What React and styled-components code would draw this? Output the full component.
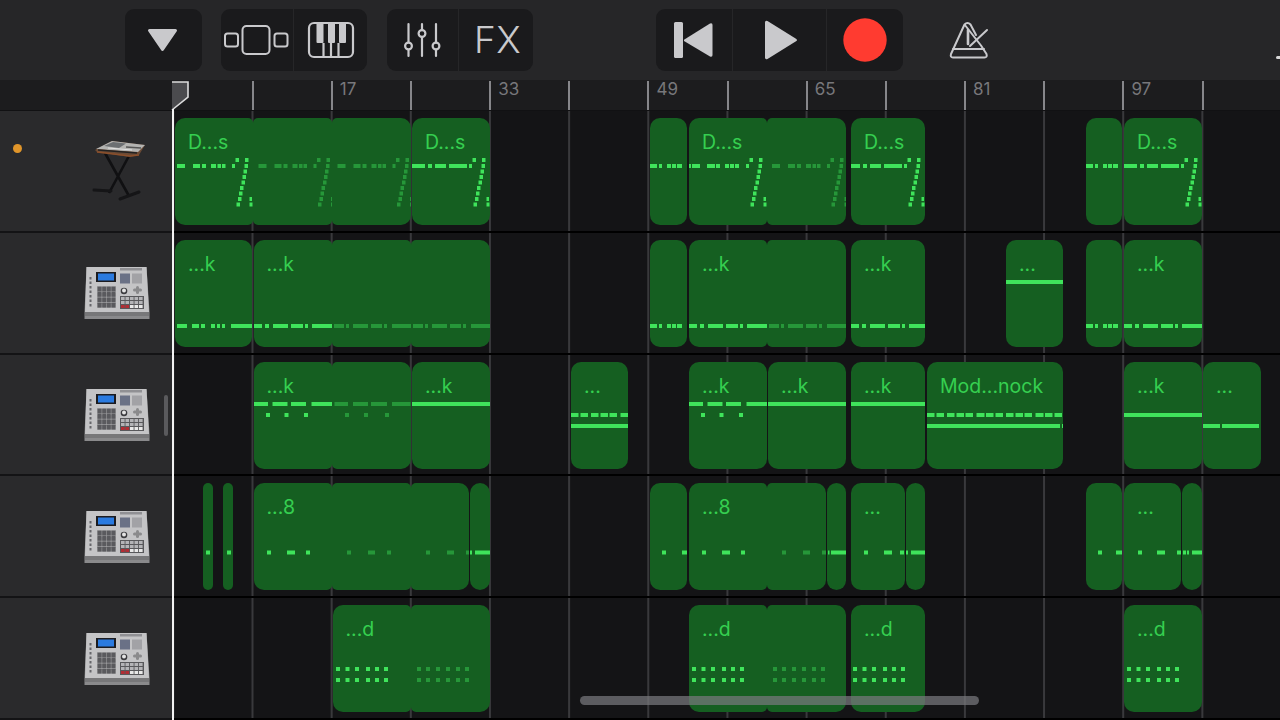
import React from "react";
import styled, { createGlobalStyle } from "styled-components";

const Global = createGlobalStyle`
  html, body { margin: 0; padding: 0; background: #141416; }
  * { box-sizing: border-box; }
`;

const Page = styled.div`
  position: relative;
  width: 1280px;
  height: 720px;
  overflow: hidden;
  display: flex;
  flex-direction: column;
  background: #141416;
  font-family: Inter, "Liberation Sans", sans-serif;
`;

/* ---------- toolbar ---------- */
const Toolbar = styled.header`
  height: 80px;
  flex: none;
  display: flex;
  align-items: center;
  padding-left: 125px;
  padding-bottom: 1px;
  background: #262628;
`;
const Group = styled.div`
  display: flex;
  height: 62px;
  margin-right: ${(p) => p.$gap || 0}px;
  background: #1a1a1c;
  border-radius: 9px;
  overflow: hidden;
`;
const Segment = styled.div`
  width: ${(p) => p.$w}px;
  display: flex;
  align-items: center;
  justify-content: center;
  padding-left: ${(p) => p.$nudge > 0 ? p.$nudge : 0}px;
  padding-right: ${(p) => p.$nudge < 0 ? -p.$nudge : 0}px;
  & + & { border-left: 1px solid #262628; }
`;
const FxLabel = styled.span`
  font-size: 37px;
  font-weight: 300;
  letter-spacing: 0.5px;
  color: #c9c9cc;
  line-height: 1;
`;
const MetronomeSlot = styled.div`
  margin-left: 46px;
  display: flex;
  align-items: center;
`;
const EdgeSliver = styled.div`
  position: absolute;
  right: 0;
  top: 56px;
  width: 4px;
  height: 3px;
  border-radius: 2px 0 0 2px;
  background: #d8d8d8;
`;

/* ---------- ruler ---------- */
const RulerRow = styled.div`
  height: 31px;
  flex: none;
  display: flex;
  background: #1c1c1e;
  border-bottom: 1px solid #111113;
`;
const RulerCorner = styled.div`
  width: 172.5px;
  flex: none;
`;
const RulerBars = styled.div`
  position: relative;
  flex: 1;
  display: flex;
  overflow: hidden;
`;
const Bar = styled.div`
  flex: none;
  width: 79.17px;
  height: 29px;
  margin-top: 1px;
  padding-left: 7px;
  border-left: ${(p) => (p.$first ? "0" : "2px solid #86868a")};
  color: #77777b;
  font-size: 17px;
  line-height: 17px;
`;
const PlayheadHandle = styled.svg`
  position: absolute;
  left: 171px;
  top: 81px;
`;

/* ---------- tracks ---------- */
const Tracks = styled.main`
  position: relative;
  flex: 1;
  display: flex;
  flex-direction: column;
`;
const TrackRow = styled.section`
  flex: 1;
  display: flex;
  min-height: 0;
`;
const TrackHeader = styled.div`
  position: relative;
  width: 172px;
  flex: none;
  display: flex;
  align-items: center;
  justify-content: flex-end;
  padding-right: 22px;
  background: #2a2a2c;
  border-bottom: 2px solid #131315;
`;
const ActiveDot = styled.span`
  position: absolute;
  left: 13px;
  top: 33px;
  width: 9px;
  height: 9px;
  border-radius: 50%;
  background: #e0952a;
`;
const Lane = styled.div`
  position: relative;
  flex: 1;
  background-color: #141416;
  background-image: linear-gradient(90deg, #39393c 2px, transparent 2px);
  background-size: 79.17px 100%;
  background-position: 79.5px 0;
  border-bottom: 2px solid #000;
`;
const Region = styled.div`
  position: absolute;
  top: 7px;
  height: 107px;
  overflow: hidden;
  background: #155f21;
  border-radius: ${(p) => (p.$joinL ? 5 : 10)}px ${(p) => (p.$joinR ? 5 : 10)}px
    ${(p) => (p.$joinR ? 5 : 10)}px ${(p) => (p.$joinL ? 5 : 10)}px;
`;
const RegionLabel = styled.span`
  position: absolute;
  left: 13px;
  top: 14px;
  font-size: 19.5px;
  line-height: 20px;
  white-space: nowrap;
  color: #35cf50;
`;
const Notes = styled.svg`
  position: absolute;
  left: 0;
  top: 0;
  fill: #3fe45b;
  fill-opacity: ${(p) => (p.$faded ? 0.42 : 1)};
`;
const Playhead = styled.div`
  position: absolute;
  left: 172px;
  top: -2px;
  bottom: 0;
  width: 2px;
  background: #f2f2f2;
`;
const VScroll = styled.div`
  position: absolute;
  left: 164px;
  top: 284px;
  width: 4px;
  height: 41px;
  border-radius: 2px;
  background: #5a5a5d;
`;
const HScroll = styled.div`
  position: absolute;
  left: 580px;
  top: 585px;
  width: 399px;
  height: 9px;
  border-radius: 5px;
  background: rgba(120, 120, 125, 0.72);
`;
const InstrumentArt = styled.svg`
  display: block;
  margin-top: ${(p) => p.$drop || 0}px;
  filter: blur(0.5px);
`;

/* ---------- toolbar icons ---------- */
const ICON = "#c9c9cc";
const DownIcon = () => (
  <svg width="33" height="26" viewBox="0 0 33 26">
    <polygon points="3.500,3.500 29.500,3.500 16.500,22.500" fill={ICON} stroke={ICON} strokeWidth="3" strokeLinejoin="round" />
  </svg>
);
const TracksIcon = () => (
  <svg width="66" height="30" viewBox="0 0 66 30" fill="none" stroke={ICON} strokeWidth="2">
    <rect x="2" y="8.500" width="13" height="13" rx="2.500" />
    <rect x="19.500" y="1" width="27" height="28" rx="4" />
    <rect x="51.500" y="8.500" width="13" height="13" rx="2.500" />
  </svg>
);
const PianoIcon = () => (
  <svg width="48" height="38" viewBox="0 0 48 38" fill="none" stroke={ICON} strokeWidth="2.2">
    <rect x="2" y="2" width="44" height="34" rx="5" />
    <path d="M16.500 22V36M24 22V36M31.500 22V36" />
    <g fill={ICON} stroke="none">
      <rect x="9.500" y="2" width="7" height="20" rx="1" />
      <rect x="21" y="2" width="7" height="20" rx="1" />
      <rect x="32" y="2" width="7" height="20" rx="1" />
    </g>
  </svg>
);
const MixerIcon = () => (
  <svg width="38" height="36" viewBox="0 0 38 36" stroke={ICON} strokeWidth="2.2" strokeLinecap="round">
    <path d="M5.500 2V34M19 2V34M33 2V34" />
    <g fill="#1a1a1c">
      <circle cx="5.500" cy="24" r="3.400" />
      <circle cx="19" cy="11.500" r="3.400" />
      <circle cx="33" cy="24" r="3.400" />
    </g>
  </svg>
);
const BackIcon = () => (
  <svg width="40" height="36" viewBox="0 0 40 36" fill={ICON}>
    <rect x="1" y="0" width="9" height="36" rx="1.500" />
    <path d="M11 17.700 37 1.500Q39.500 0.500 39.500 3V33Q39.500 35.500 37 34.500L11 19Z" />
  </svg>
);
const PlayIcon = () => (
  <svg width="34" height="40" viewBox="0 0 34 40" fill={ICON}>
    <path d="M1 2.500Q1 0 3.500 1L32 18.700Q34 20 32 21.300L3.500 39Q1 40 1 37.500Z" />
  </svg>
);
const RecordIcon = () => (
  <svg width="44" height="44" viewBox="0 0 44 44">
    <circle cx="22" cy="22" r="21.700" fill="#ff3b30" />
  </svg>
);
const MetronomeIcon = () => (
  <svg width="40" height="38" viewBox="0 0 40 38" fill="none" stroke={ICON} strokeWidth="2" strokeLinecap="round" strokeLinejoin="round">
    <path d="M15.500 3.500Q18.500 0.500 21.500 3.500L27 14M32 24.500 37.500 33Q38.500 36.500 35.500 36.500H4Q1 36.500 2 33L15.500 3.500Z" />
    <path d="M4 28H35" />
    <path d="M19 9V23" strokeWidth="2.600" />
    <path d="M21 25 38 9" />
  </svg>
);

/* ---------- instrument drawings ---------- */
const KeyboardArt = () => (
  <InstrumentArt width="66" height="66" viewBox="84 139 66 66">
    <path d="M105 154 L129 197 M130 155 L109 194" stroke="#101012" strokeWidth="2.600" fill="none" />
    <path d="M94 191 L111 192 M120 200 L139 193" stroke="#151517" strokeWidth="3" strokeLinecap="round" fill="none" />
    <path d="M95 151 L112 142 L145 146 L139 156 L130 158 L97 153Z" fill="#6b4a35" />
    <path d="M96 150 L112 142 L145 146 L138 153 Z" fill="#b4b4b2" />
    <path d="M104 147 L113 143 L126 144.500 L119 149Z" fill="#6c6f72" />
    <path d="M98 151 L137 154" stroke="#222" strokeWidth="1.600" />
    <path d="M126 148 L141 149" stroke="#555" strokeWidth="1.400" />
    <path d="M108 149 L132 151" stroke="#e4e4e4" strokeWidth="0.900" />
    <path d="M97 153 L130 157 L139 156" stroke="#8b4f2b" strokeWidth="1.300" fill="none" />
  </InstrumentArt>
);

const padCoords = [0, 1, 2, 3];
const bankCols = [0, 1, 2, 3, 4];
const bankRows = [0, 1, 2];
const MpcArt = () => (
  <InstrumentArt $drop={3} width="66" height="56" viewBox="0 0 66 56">
    <path d="M2.500 1H62.500L65.500 46V53H0.500V46Z" fill="#8a8a8c" />
    <path d="M2.500 1H62.500L65 46H1Z" fill="#c4c4c6" />
    <path d="M1 46H65V50H1Z" fill="#777779" />
    <rect x="12" y="6" width="20" height="10" fill="#1c1c20" />
    <rect x="14" y="7.500" width="16" height="7" fill="#2b7be0" />
    <rect x="36" y="2" width="22" height="2.500" fill="#909094" />
    <rect x="36" y="7.500" width="10" height="10" fill="#6a7186" />
    <rect x="48" y="7.500" width="10" height="10" fill="#a2a2a6" />
    <rect x="13" y="20" width="19" height="22" fill="#9a9a9c" />
    {padCoords.map((r) =>
      padCoords.map((c) => (
        <rect key={`${r}-${c}`} x={13.600 + c * 4.600} y={20.800 + r * 5.300} width="4" height="4.700" rx="0.600" fill="#5a5a5e" />
      ))
    )}
    <circle cx="40" cy="25" r="3.300" fill="#3c3c40" />
    <circle cx="40" cy="24.500" r="2" fill="#e4e4e4" />
    <rect x="49" y="22.500" width="9" height="3" rx="1.500" fill="#8a8a8c" />
    <rect x="52" y="20" width="3" height="8" rx="1.500" fill="#8a8a8c" />
    <rect x="36" y="30" width="24" height="13" fill="#58585b" />
    {bankRows.map((r) =>
      bankCols.map((c) => (
        <rect
          key={`b${r}-${c}`}
          x={37 + c * 4.500}
          y={31 + r * 4}
          width="3.600"
          height="3"
          fill={r === 2 && c < 2 ? "#b32c33" : r === 2 ? "#e8e8e8" : "#b4b4b7"}
        />
      ))
    )}
    <path d="M6.500 11V42" stroke="#66666b" strokeWidth="2" strokeDasharray="2.500 2" />
  </InstrumentArt>
);

/* ---------- note data: all offsets are from the region's left/top ---------- */
const row = (y, spans, off = 0) => spans.map(([x, w]) => [x + off, y, w]);
const dots = (y, xs, w = 4) => xs.map((x) => [x, y, w]);
const slash = (off = 0) => [
  [60.500 + off, 42, 3.500],
  [70 + off, 42, 3.500],
  [69.500 + off, 48, 3.500],
  [68.500 + off, 53.500, 3.500],
  [67.500 + off, 59, 3.500],
  [66.500 + off, 64.500, 3.500],
  [65 + off, 70, 3.500],
  [64 + off, 75.500, 3.500],
  [63 + off, 81, 3.500],
  [61.500 + off, 86.500, 3.500],
  [74.500 + off, 81, 2.500],
  [74.500 + off, 86.500, 3],
];
const D1H = [[2, 8], [18, 7], [27, 4], [36, 5], [42.500, 3.500], [47, 3.500], [57, 3]];
const D2H = [[0, 13], [16, 4], [23, 11], [37, 14], [51, 4], [57, 3]];
const D3H = [[0, 2], [3, 8], [18, 8], [27, 4], [36, 4], [41, 4], [46, 4], [57, 3]];
const DrumsA = (off = 0) => [...row(48, D1H, off), ...slash(off)];
const DrumsB = (off = 0) => [...row(48, D2H, off), ...slash(off)];
const DrumsC = [...row(48, D3H), ...slash(0)];
const DrumsShort = row(48, [[0, 7], [9, 3], [17, 4], [22, 4], [27, 5]]);

const KickA = row(86, [[2, 10], [17, 7], [26, 4], [36, 4], [42, 3], [47, 3], [56, 21]]);
const KickB = row(86, [[0, 8], [11, 4], [19, 15], [37, 12], [51, 3], [58, 20]]);
const KickC = row(86, [[2, 10], [14, 3], [21, 15], [39, 11], [52, 3], [60, 19]]);
const KickShort = row(86, [[0, 7], [9, 3], [17, 4], [22, 4], [27, 5]]);

const dashP = [[0, 7.500], [9.500, 7.500], [20, 7.500], [29.500, 7.500], [38.500, 7.500], [49.500, 8]];
const SnareA = [
  ...row(42, [[0, 14], [18.500, 15], [37, 15], [57.500, 21]]),
  ...dots(53, [12, 30.500, 50]),
];
const SnareB = [
  ...row(42, [[2.500, 13.500], [21, 15], [39, 16], [60, 18.500]]),
  ...dots(53, [13, 32, 53]),
];
const Solid = (y, w) => row(y, [[0, w]]);

const HatA = dots(69.500, [13, 52]).concat(row(69.500, [[33, 8]]));
const HatB = dots(69.500, [15, 55]).concat(row(69.500, [[36, 7]]));
const Roll = row(69.500, [[0, 2], [5, 15]]);

const FIVE = [3, 12.500, 22, 33, 42, 51];
const FIVE_B = [6, 15, 25, 35, 45, 54];
const Grid = (xs, off = 0) => [
  ...dots(64, xs.map((x) => x + off)),
  ...dots(75, xs.map((x) => x + off)),
];

const tracks = [
  {
    art: "keys",
    dot: true,
    regions: [
      { x: 175, w: 77.500, label: "D...s", notes: DrumsA(), joinR: 1 },
      { x: 252.500, w: 79, faded: 1, notes: DrumsA(3.500), joinL: 1, joinR: 1 },
      { x: 331.500, w: 79, faded: 1, notes: DrumsA(3.500), joinL: 1 },
      { x: 412, w: 78, label: "D...s", notes: DrumsB() },
      { x: 650, w: 37, notes: DrumsShort },
      { x: 689, w: 78, label: "D...s", notes: DrumsC, joinR: 1 },
      { x: 767, w: 79, faded: 1, notes: DrumsA(3), joinL: 1 },
      { x: 851, w: 74, label: "D...s", notes: DrumsB(-4) },
      { x: 1086, w: 36, notes: DrumsShort },
      { x: 1124, w: 78, label: "D...s", notes: DrumsB() },
    ],
  },
  {
    art: "mpc",
    regions: [
      { x: 175, w: 77, label: "...k", notes: KickA },
      { x: 253.500, w: 78, label: "...k", notes: KickB, joinR: 1 },
      { x: 331.500, w: 79, faded: 1, notes: KickC, joinL: 1, joinR: 1 },
      { x: 410.500, w: 79.500, faded: 1, notes: KickC, joinL: 1 },
      { x: 650, w: 37, notes: KickShort },
      { x: 689, w: 78, label: "...k", notes: KickB, joinR: 1 },
      { x: 767, w: 79, faded: 1, notes: KickC, joinL: 1 },
      { x: 851, w: 74, label: "...k", notes: KickB },
      { x: 1006, w: 57, label: "...", notes: row(42, [[0, 57]]) },
      { x: 1086, w: 36, notes: KickShort },
      { x: 1124, w: 78, label: "...k", notes: KickB },
    ],
  },
  {
    art: "mpc",
    regions: [
      { x: 253.500, w: 78, label: "...k", notes: SnareA, joinR: 1 },
      { x: 331.500, w: 79, faded: 1, notes: SnareB, joinL: 1 },
      { x: 412, w: 78, label: "...k", notes: Solid(42, 78) },
      { x: 571, w: 57, label: "...", notes: [...row(53, dashP), ...Solid(64, 57)] },
      { x: 689, w: 78, label: "...k", notes: SnareA },
      { x: 768, w: 78, label: "...k", notes: Solid(42, 78) },
      { x: 851, w: 74, label: "...k", notes: Solid(42, 74) },
      {
        x: 927,
        w: 136,
        label: "Mod...nock",
        notes: [
          ...row(53, dashP),
          ...row(53, dashP, 59),
          ...row(53, dashP.slice(0, 2), 118),
          ...row(64, [[0, 133], [135, 1.500]]),
        ],
      },
      { x: 1124, w: 78, label: "...k", notes: Solid(53, 78) },
      { x: 1203, w: 58, label: "...", notes: row(64, [[0, 17], [19, 37]]) },
    ],
  },
  {
    art: "mpc",
    regions: [
      { x: 203, w: 10, notes: dots(69.500, [3]) },
      { x: 222.500, w: 10, notes: dots(69.500, [4]) },
      { x: 253.500, w: 78, label: "...8", notes: HatA, joinR: 1 },
      { x: 331.500, w: 79, faded: 1, notes: HatB, joinL: 1, joinR: 1 },
      { x: 410.500, w: 58.500, faded: 1, notes: HatB, joinL: 1 },
      { x: 470, w: 20, notes: Roll },
      { x: 650, w: 37, notes: dots(69.500, [12]).concat(row(69.500, [[32, 5]])) },
      { x: 689, w: 78, label: "...8", notes: HatA, joinR: 1 },
      { x: 767, w: 58.500, faded: 1, notes: HatB, joinL: 1 },
      { x: 827, w: 19, notes: row(69.500, [[1, 1.500], [4, 15]]) },
      { x: 851, w: 54, label: "...", notes: dots(69.500, [13, 49]).concat(row(69.500, [[33, 8]])) },
      { x: 906, w: 19, notes: Roll },
      { x: 1086, w: 36, notes: dots(69.500, [12]).concat(row(69.500, [[30, 6]])) },
      { x: 1124, w: 57, label: "...", notes: dots(69.500, [14, 53]).concat(row(69.500, [[33, 8]])) },
      { x: 1182, w: 20, notes: row(69.500, [[1, 3], [5, 2], [10, 10]]) },
    ],
  },
  {
    art: "mpc",
    regions: [
      { x: 332.500, w: 78.500, label: "...d", notes: Grid(FIVE), joinR: 1 },
      { x: 411, w: 79, faded: 1, notes: Grid(FIVE_B), joinL: 1 },
      { x: 689, w: 78, label: "...d", notes: Grid(FIVE), joinR: 1 },
      { x: 767, w: 79, faded: 1, notes: Grid(FIVE_B), joinL: 1 },
      { x: 851, w: 74, label: "...d", notes: Grid(FIVE, -1) },
      { x: 1124, w: 78, label: "...d", notes: Grid(FIVE) },
    ],
  },
];

const bars = Array.from({ length: 14 }, (_, i) => i);
const barLabel = (i) => (i >= 2 && i % 2 === 0 ? 1 + (i / 2) * 16 : "");

const NoteStrip = ({ width, notes, faded }) => (
  <Notes width={width} height="107" $faded={faded}>
    {notes.map(([x, y, w], i) => (
      <rect key={i} x={x} y={y - 2} width={w} height="4" />
    ))}
  </Notes>
);

export default function App() {
  return (
    <Page>
      <Global />
      <Toolbar>
        <Group $gap={19}>
          <Segment $w={77} $nudge={-2}><DownIcon /></Segment>
        </Group>
        <Group $gap={20}>
          <Segment $w={72} $nudge={-2}><TracksIcon /></Segment>
          <Segment $w={74}><PianoIcon /></Segment>
        </Group>
        <Group $gap={123}>
          <Segment $w={71} $nudge={-2}><MixerIcon /></Segment>
          <Segment $w={75} $nudge={3}><FxLabel>FX</FxLabel></Segment>
        </Group>
        <Group>
          <Segment $w={76} $nudge={-3}><BackIcon /></Segment>
          <Segment $w={94} $nudge={2}><PlayIcon /></Segment>
          <Segment $w={77} $nudge={-1}><RecordIcon /></Segment>
        </Group>
        <MetronomeSlot><MetronomeIcon /></MetronomeSlot>
      </Toolbar>
      <EdgeSliver />
      <RulerRow>
        <RulerCorner />
        <RulerBars>
          {bars.map((i) => (
            <Bar key={i} $first={i === 0}>{barLabel(i)}</Bar>
          ))}
        </RulerBars>
      </RulerRow>
      <PlayheadHandle width="19" height="30" viewBox="0 0 19 30">
        <path d="M1 1H17V16L1 29Z" fill="#4b4b4e" />
        <path d="M1 1H17V16L1 29" fill="none" stroke="#dcdcdc" strokeWidth="1.600" />
      </PlayheadHandle>
      <Tracks>
        {tracks.map((t, ti) => (
          <TrackRow key={ti}>
            <TrackHeader>
              {t.dot && <ActiveDot />}
              {t.art === "keys" ? <KeyboardArt /> : <MpcArt />}
            </TrackHeader>
            <Lane>
              {t.regions.map((r, ri) => (
                <Region
                  key={ri}
                  $joinL={r.joinL}
                  $joinR={r.joinR}
                  style={{ left: r.x - 172, width: r.w }}
                >
                  {r.label && <RegionLabel>{r.label}</RegionLabel>}
                  <NoteStrip width={r.w} notes={r.notes} faded={r.faded} />
                </Region>
              ))}
            </Lane>
          </TrackRow>
        ))}
        <Playhead />
        <VScroll />
        <HScroll />
      </Tracks>
    </Page>
  );
}
